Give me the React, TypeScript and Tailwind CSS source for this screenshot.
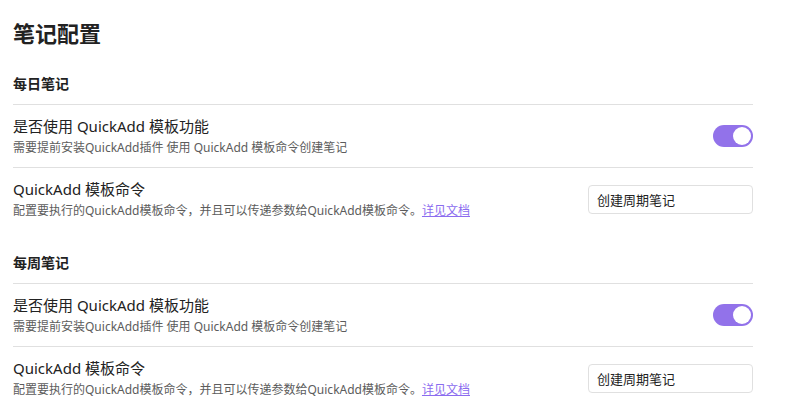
import React from 'react';

const font = { fontFamily: '"Noto Sans", "Noto Sans CJK SC", sans-serif' };

const Toggle: React.FC = () => (
  <div className="w-[40px] h-[22px] rounded-full bg-[#9272ea] flex items-center justify-end px-[2px] shrink-0">
    <div className="w-[18px] h-[18px] rounded-full bg-white"></div>
  </div>
);

const Section: React.FC<{ title: string; first?: boolean }> = ({ title, first }) => (
  <section className={first ? 'mt-[25px]' : 'mt-[23px]'}>
    <h2 className="text-[14px] leading-[20px] font-bold text-[#222222] pb-[10px]">{title}</h2>

    {/* toggle row */}
    <div className="flex items-center justify-between border-t border-[#e0e0e0] py-[10px]">
      <div>
        <div className="text-[15px] leading-[22px] text-[#222222]">是否使用 QuickAdd 模板功能</div>
        <div className="text-[12px] leading-[18px] text-[#5c5c5c] mt-[2px]">
          需要提前安装QuickAdd插件 使用 QuickAdd 模板命令创建笔记
        </div>
      </div>
      <Toggle />
    </div>

    {/* command row */}
    <div className="flex items-center justify-between border-t border-[#e0e0e0] py-[10px]">
      <div>
        <div className="text-[15px] leading-[22px] text-[#222222]">QuickAdd 模板命令</div>
        <div className="text-[12px] leading-[18px] text-[#5c5c5c] mt-[2px]">
          配置要执行的QuickAdd模板命令，并且可以传递参数给QuickAdd模板命令。
          <a href="#" className="text-[#8b6cef] underline">详见文档</a>
        </div>
      </div>
      <input
        defaultValue="创建周期笔记"
        className="w-[165px] h-[29px] rounded-[4px] border border-[#e0e0e0] px-[8px] text-[13px] text-[#222222] outline-none"
        style={font}
      />
    </div>
  </section>
);

export default function App() {
  return (
    <div className="w-[790px] h-[418px] bg-white overflow-hidden" style={font}>
      <div className="w-[740px] ml-[13px] pt-[17px]">
        <h1 className="text-[22px] leading-[32px] font-bold text-[#222222]">笔记配置</h1>
        <Section title="每日笔记" first />
        <Section title="每周笔记" />
      </div>
    </div>
  );
}
